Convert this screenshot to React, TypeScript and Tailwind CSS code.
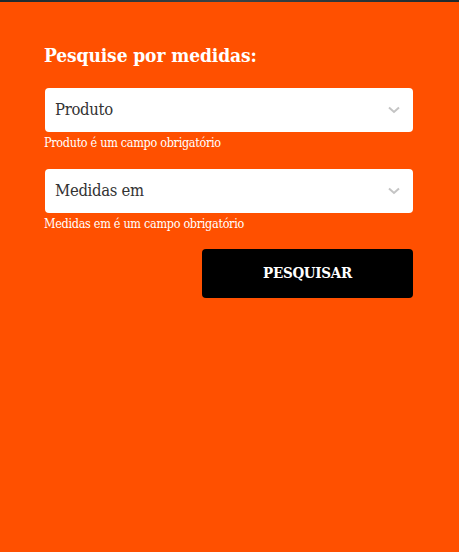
export default function App() {
  const font = { fontFamily: '"DejaVu Serif Condensed", "DejaVu Serif", serif' };
  return (
    <div className="w-[459px] h-[552px] bg-[#ff5000] flex flex-col" style={font}>
      <div className="h-[2px] bg-gradient-to-r from-[#1d2a2e] via-[#3a4447] to-[#1d2a2e]" />
      <div className="pl-[45px] pr-[46px] pt-[41px] flex flex-col">
        <h2 className="text-white text-[19px] font-bold leading-[25px] tracking-[-0.1px] -ml-px">Pesquise por medidas:</h2>
        <Field label="Produto" className="mt-[20px]" />
        <Field label="Medidas em" className="mt-[18px]" />
        <div className="flex justify-end mt-[17px]">
          <button className="w-[211px] h-[49px] bg-black rounded-[4px] text-white text-[15px] font-bold tracking-[-0.3px]">
            PESQUISAR
          </button>
        </div>
      </div>
    </div>
  );
}

function Field({ label, className }: { label: string; className?: string }) {
  return (
    <div className={className}>
      <div className="h-[44px] bg-white rounded-[4px] flex items-center justify-between pl-[10px] pr-[13px]">
        <span className="text-[#333] text-[16.5px] tracking-[-0.3px]">{label}</span>
        <svg width="12" height="8" viewBox="0 0 12 8" fill="none">
          <path d="M1 1.5l5 4.5 5-4.5" stroke="#c4c4c4" strokeWidth="2" />
        </svg>
      </div>
      <p className="text-white text-[12.5px] leading-[17px] mt-[2px] -ml-px tracking-[-0.3px]">
        {label} é um campo obrigatório
      </p>
    </div>
  );
}
